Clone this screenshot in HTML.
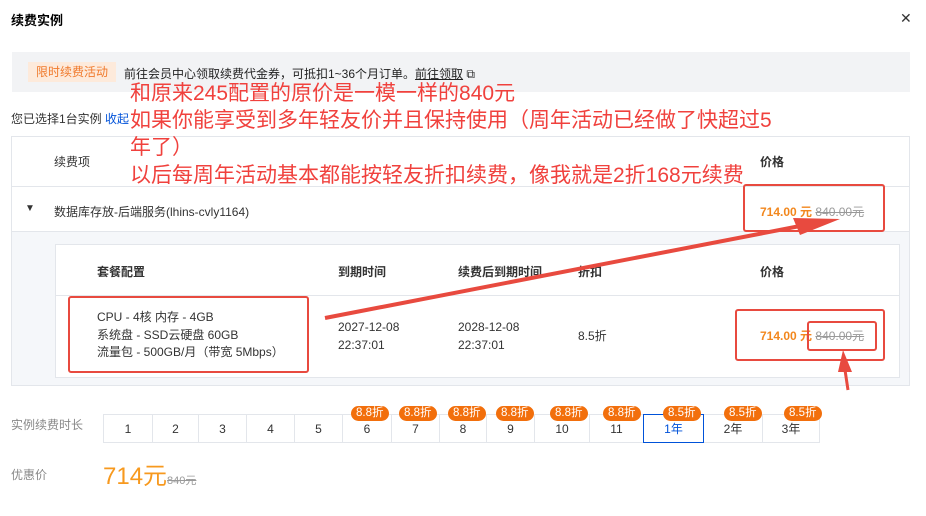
<!DOCTYPE html>
<html><head><meta charset="utf-8"><style>
*{margin:0;padding:0;box-sizing:border-box}
body{width:926px;height:516px;background:#fff;font-family:"Liberation Sans","Noto Sans CJK SC",sans-serif;font-size:12px;color:#333;position:relative;overflow:hidden}
.a{position:absolute;white-space:nowrap}
.b{font-weight:bold}
.red{color:#f0413d;font-size:21px;line-height:27px}
.box{position:absolute;border:2.5px solid #e84a3f;border-radius:3px}
.cell{position:absolute;top:414px;height:29px;border:1px solid #e3e6eb;border-left:none;text-align:center;line-height:29px;font-size:12px;color:#333}
.bd{position:absolute;top:406px;height:15px;padding:0 5px;background:#f26f0c;color:#fff;border-radius:8px;font-size:11.5px;line-height:15px}
.or{color:#f2871d;font-weight:bold}
.st{color:#999;text-decoration:line-through}
</style></head><body>
<div class="a b" style="left:11px;top:10px;font-size:13px;color:#000">续费实例</div>
<div class="a" style="left:900px;top:10px;font-size:14px;color:#333">✕</div>
<div class="a" style="left:12px;top:52px;width:898px;height:40px;background:#f2f3f5"></div>
<div class="a" style="left:28px;top:62px;width:88px;height:20px;background:#fdeadb;color:#f07a2c;line-height:20px;text-align:center">限时续费活动</div>
<div class="a" style="left:124px;top:65px;color:#222">前往会员中心领取续费代金券，可抵扣1~36个月订单。<span style="text-decoration:underline">前往领取</span> ⧉</div>
<div class="a" style="left:11px;top:110px;color:#333">您已选择1台实例 <span style="color:#0052d9">收起</span></div>
<div class="a" style="left:11px;top:136px;width:899px;height:250px;border:1px solid #e3e6eb;background:#f5f7fa"></div>
<div class="a" style="left:12px;top:137px;width:897px;height:95px;background:#fff;border-bottom:1px solid #e3e6eb"></div>
<div class="a" style="left:12px;top:186px;width:897px;height:1px;background:#e3e6eb"></div>
<div class="a" style="left:54px;top:153px">续费项</div>
<div class="a b" style="left:760px;top:153px">价格</div>
<div class="a" style="left:25px;top:203px;font-size:10px">▼</div>
<div class="a" style="left:54px;top:203px">数据库存放-后端服务(lhins-cvly1164)</div>
<div class="a" style="left:760px;top:203px"><span class="or">714.00 元</span> <span class="st">840.00元</span></div>
<div class="a" style="left:55px;top:244px;width:845px;height:134px;background:#fff;border:1px solid #e3e6eb"></div>
<div class="a" style="left:56px;top:295px;width:843px;height:1px;background:#e3e6eb"></div>
<div class="a b" style="left:97px;top:263px">套餐配置</div>
<div class="a b" style="left:338px;top:263px">到期时间</div>
<div class="a b" style="left:458px;top:263px">续费后到期时间</div>
<div class="a b" style="left:578px;top:263px">折扣</div>
<div class="a b" style="left:760px;top:263px">价格</div>
<div class="a" style="left:97px;top:309px;line-height:17.5px">CPU - 4核 内存 - 4GB<br>系统盘 - SSD云硬盘 60GB<br>流量包 - 500GB/月（带宽 5Mbps）</div>
<div class="a" style="left:338px;top:318px;line-height:18px">2027-12-08<br>22:37:01</div>
<div class="a" style="left:458px;top:318px;line-height:18px">2028-12-08<br>22:37:01</div>
<div class="a" style="left:578px;top:327px">8.5折</div>
<div class="a" style="left:760px;top:327px"><span class="or">714.00 元</span> <span class="st">840.00元</span></div>

<div class="a red" style="left:130px;top:80px">和原来245配置的原价是一模一样的840元</div>
<div class="a red" style="left:130px;top:107px">如果你能享受到多年轻友价并且保持使用（周年活动已经做了快超过5</div>
<div class="a red" style="left:130px;top:134px">年了）</div>
<div class="a red" style="left:130px;top:162px">以后每周年活动基本都能按轻友折扣续费，像我就是2折168元续费</div>

<div class="box" style="left:743px;top:184px;width:142px;height:48px"></div>
<div class="box" style="left:735px;top:309px;width:150px;height:52px"></div>
<div class="box" style="left:807px;top:321px;width:70px;height:30px"></div>
<div class="box" style="left:68px;top:296px;width:241px;height:77px"></div>
<svg class="a" style="left:0;top:0" width="926" height="516">
<line x1="325" y1="318" x2="800" y2="226" stroke="#e84a3f" stroke-width="4"/>
<polygon points="840,219 793,218 800,235" fill="#e84a3f"/>
<line x1="848" y1="390" x2="845" y2="370" stroke="#e84a3f" stroke-width="3"/>
<polygon points="843,350 838,372 852,372" fill="#e84a3f"/>
</svg>

<div class="a" style="left:11px;top:416px;color:#888">实例续费时长</div>
<div class="a" style="left:103px;top:414px;width:1px;height:29px;background:#e3e6eb"></div>
<div class="cell" style="left:104px;width:49px">1</div>
<div class="cell" style="left:153px;width:46px">2</div>
<div class="cell" style="left:199px;width:48px">3</div>
<div class="cell" style="left:247px;width:48px">4</div>
<div class="cell" style="left:295px;width:48px">5</div>
<div class="cell" style="left:343px;width:49px">6</div>
<div class="cell" style="left:392px;width:48px">7</div>
<div class="cell" style="left:440px;width:47px">8</div>
<div class="cell" style="left:487px;width:48px">9</div>
<div class="cell" style="left:535px;width:55px">10</div>
<div class="cell" style="left:590px;width:54px">11</div>
<div class="cell" style="left:643px;width:61px;border:1px solid #0052d9;color:#0052d9">1年</div>
<div class="cell" style="left:704px;width:59px">2年</div>
<div class="cell" style="left:763px;width:57px">3年</div>
<div class="bd" style="left:351px">8.8折</div>
<div class="bd" style="left:399px">8.8折</div>
<div class="bd" style="left:448px">8.8折</div>
<div class="bd" style="left:496px">8.8折</div>
<div class="bd" style="left:550px">8.8折</div>
<div class="bd" style="left:603px">8.8折</div>
<div class="bd" style="left:663px">8.5折</div>
<div class="bd" style="left:724px">8.5折</div>
<div class="bd" style="left:784px">8.5折</div>

<div class="a" style="left:11px;top:466px;color:#888">优惠价</div>
<div class="a" style="left:103px;top:463px;font-size:24px;color:#f7991e;line-height:28px">714元<span class="st" style="font-size:11px;color:#999">840元</span></div>
</body></html>
